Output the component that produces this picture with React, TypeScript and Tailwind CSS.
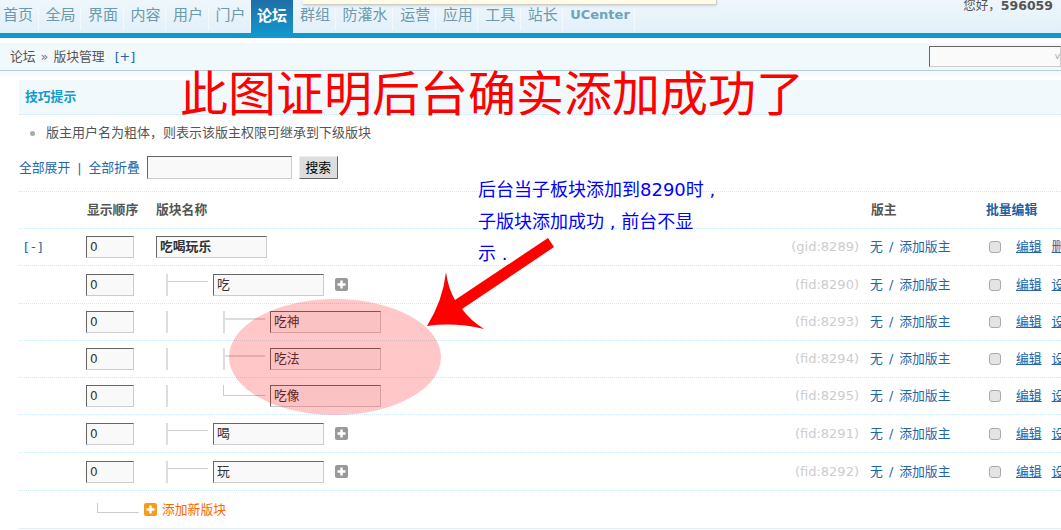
const navItems = ["首页", "全局", "界面", "内容", "用户", "门户", "论坛", "群组", "防灌水", "运营", "应用", "工具", "站长", "UCenter"];

const rows = [
  { name: "吃", level: 1, id: "(fid:8290)", h: "h-[38px]", tool: "设", plus: true },
  { name: "吃神", level: 2, id: "(fid:8293)", h: "h-[37px]", tool: "设" },
  { name: "吃法", level: 2, id: "(fid:8294)", h: "h-[37px]", tool: "设" },
  { name: "吃像", level: 3, id: "(fid:8295)", h: "h-[37px]", tool: "设" },
  { name: "喝", level: 1, id: "(fid:8291)", h: "h-[38px]", tool: "设", plus: true },
  { name: "玩", level: 1, id: "(fid:8292)", h: "h-[38px]", tool: "设", plus: true },
];

const inputBox = "h-[22px] border border-t-[#666] border-l-[#666] border-r-[#ccc] border-b-[#ccc] bg-[#f9f9f9] text-[#333]";

const Connector = ({ thin, last }: { thin?: boolean; last?: boolean }) => (
  <div className={last ? "h-[11px] w-[42px] self-start border-b border-l border-[#ccc]" : "h-[22px] w-[42px] border-l-2 border-[#ddd]"}>
    {!last && <div className={thin ? "h-[8px] border-b border-[#ccc]" : "h-[9px] border-b-2 border-[#ddd]"} />}
  </div>
);

const PlusIcon = ({ color }: { color: string }) => (
  <svg width="13" height="13" viewBox="0 0 13 13">
    <rect width="13" height="13" rx="2" fill={color} />
    <path d="M6.5 2.5v8M2.5 6.5h8" stroke="#fff" strokeWidth="2.4" />
  </svg>
);

const RowTail = ({ id, tool }: { id: string; tool: string }) => (
  <>
    <div className="w-[114px] shrink-0 pr-[11px] text-right text-[13px] text-[#ccc] whitespace-nowrap">{id}</div>
    <div className="w-[116px] shrink-0 text-[#2366a8] whitespace-nowrap">
      无 <span className="mx-[2px]">/</span> 添加版主
    </div>
    <div className="flex shrink-0 items-center whitespace-nowrap text-[#2366a8]">
      <span className="ml-[3px] h-[12px] w-[12px] rounded-[3px] border border-[#aaa] bg-[#e4e4e4]" />
      <span className="ml-[15px] underline">编辑</span>
      <span className="ml-[10px] underline">{tool}</span>
    </div>
  </>
);

const ChildRow = ({ row }: { row: (typeof rows)[number] }) => (
  <div className={`flex ${row.h} items-center border-b border-dotted border-[#cfe8f4]`}>
    <div className="w-[67px] shrink-0" />
    <div className="w-[70px] shrink-0">
      <div className={`${inputBox} w-[48px] pl-[3px] text-[12px] leading-[20px]`}>0</div>
    </div>
    <div className="flex w-[600px] shrink-0 items-center">
      <div className="ml-[10px] flex items-center">
        {row.level === 1 ? (
          <Connector thin />
        ) : (
          <>
            <div className="h-[22px] w-[57px] border-l-2 border-[#ddd]" />
            <Connector last={row.level === 3} />
          </>
        )}
      </div>
      <div className={`${inputBox} ml-[5px] w-[111px] pl-[3px] leading-[20px]`}>{row.name}</div>
      {row.plus && (
        <div className="ml-[11px] flex">
          <PlusIcon color="#999" />
        </div>
      )}
    </div>
    <RowTail id={row.id} tool={row.tool} />
  </div>
);

export default function App() {
  return (
    <div className="relative h-[530px] w-[1061px] overflow-hidden bg-white text-[12.8px] text-[#555] font-['DejaVu_Sans','Noto_Sans_CJK_SC',sans-serif]">
      <header className="h-[38px] bg-gradient-to-b from-[#eef6fb] to-[#e2f0fa] border-b-[5px] border-[#0c99cd]">
        <div className="flex items-start justify-between">
          <nav className="-ml-[4px] flex h-[33px]">
            {navItems.map((item) =>
              item === "论坛" ? (
                <div
                  key={item}
                  className="flex h-[38px] w-[42px] justify-center bg-gradient-to-b from-[#1e6ea7] to-[#0e9bd0] pt-[6px] text-[15px] leading-[20px] font-bold text-white"
                >
                  {item}
                </div>
              ) : (
                <div key={item} className="mt-[7px] flex h-[23px] items-start border-r border-[#f4f9fc] pl-[7px] pr-[4.5px]">
                  <span className={item === "UCenter" ? "text-[13px] leading-[16px] font-bold text-[#6ea4bb]" : "text-[15px] leading-[16px] text-[#6b9aac]"}>{item}</span>
                </div>
              )
            )}
          </nav>
          <div className="pr-[8px] text-[12.5px] leading-[12px] whitespace-nowrap">
            您好，<span className="font-bold">596059</span>
          </div>
        </div>
      </header>

      <div className="mt-[5px] flex h-[27px] items-center justify-between bg-[#f2f9fd]">
        <div className="flex items-center pl-[10px]">
          论坛
          <span className="mx-[5px] text-[#777]">»</span>
          版块管理
          <span className="ml-[10px] text-[#2366a8]">[+]</span>
        </div>
        <div className="flex h-[21px] w-[132px] items-center justify-end border border-t-[#666] border-l-[#666] border-b-[#ccc] border-r-[#ccc] bg-[#fafafa] text-[#aaa]">
          <span className="text-[9px]">v</span>
        </div>
      </div>
      <div className="h-[10px] border-t border-[#b5cfd9] bg-gradient-to-b from-[#f4f9fd] to-white" />

      <main className="pl-[19px]">
        <div className="flex h-[35px] items-center border-b border-dotted border-[#cfe8f4] bg-[#f2f9fd] pl-[6px] font-bold text-[#0f9bce]">技巧提示</div>
        <div className="mt-[9px] flex h-[18px] items-center pl-[11px] text-[13px]">
          <span className="h-[5px] w-[5px] rounded-full bg-[#aaa]" />
          <span className="ml-[11px]">版主用户名为粗体，则表示该版主权限可继承到下级版块</span>
        </div>
        <div className="mt-[14px] flex h-[23px] items-center text-[#2366a8]">
          <span>全部展开</span>
          <span className="mx-[7px]">|</span>
          <span>全部折叠</span>
          <div className={`${inputBox} ml-[7px] !h-[23px] w-[145px]`} />
          <div className="ml-[7px] flex h-[23px] w-[39px] items-center justify-center border border-t-[#eee] border-l-[#eee] border-r-[#666] border-b-[#666] bg-[#ddd] text-black">搜索</div>
        </div>

        <div className="mt-[12px] flex h-[38px] items-center border-y border-dotted border-[#cfe8f4] font-bold">
          <div className="w-[68px]" />
          <div className="w-[69px]">显示顺序</div>
          <div className="w-[715px]">版块名称</div>
          <div className="w-[115px]">版主</div>
          <div className="text-[#1c5fa5]">批量编辑</div>
        </div>

        <div className="flex h-[37px] items-center border-b border-dotted border-[#cfe8f4]">
          <div className="w-[67px] shrink-0 pl-[5px] tracking-[2px] text-[#2366a8]">[-]</div>
          <div className="w-[70px] shrink-0">
            <div className={`${inputBox} w-[48px] pl-[3px] text-[12px] leading-[20px]`}>0</div>
          </div>
          <div className="w-[600px] shrink-0">
            <div className={`${inputBox} w-[111px] pl-[3px] font-bold leading-[20px]`}>吃喝玩乐</div>
          </div>
          <RowTail id="(gid:8289)" tool="删" />
        </div>

        {rows.map((row) => (
          <ChildRow key={row.id} row={row} />
        ))}

        <div className="flex h-[38px] border-b border-[#e0eef8]">
          <div className="flex items-center pl-[78px]">
            <div className="mb-[4px] h-[10px] w-[42px] border-b border-l border-[#ccc]" />
            <div className="ml-[5px] flex">
              <PlusIcon color="#f79a1e" />
            </div>
            <span className="ml-[5px] text-[#f60]">添加新版块</span>
          </div>
        </div>
      </main>

      {/* annotations pasted on top of the screenshot */}
      <div className="absolute left-[303px] top-0 h-[5px] w-[414px] border-b border-r border-[#ccc] bg-[#fffbe4] shadow-sm" />
      <div className="absolute left-[180px] top-[55px] text-[48px] leading-[70px] whitespace-nowrap text-[#f00] font-['Noto_Sans_CJK_SC',sans-serif]">此图证明后台确实添加成功了</div>
      <div className="absolute left-[478px] top-[174px] w-[250px] text-[18px] leading-[32px] whitespace-pre-wrap text-[#00f] font-['DejaVu_Sans','Noto_Sans_CJK_SC',sans-serif]">
        {"后台当子板块添加到8290时 ,\n子版块添加成功 , 前台不显\n示 ."}
      </div>
      <div className="absolute left-[229px] top-[299px] h-[116px] w-[212px] rounded-[50%] bg-[#ff0000]/22" />
      <svg className="absolute left-0 top-0" width="1061" height="530" viewBox="0 0 1061 530">
        <path d="M548 238L554 247L462 309Q470 320 484 329Q455 322 427 326Q443 300 446 272Q448 288 455 300Z" fill="#f00" />
      </svg>
    </div>
  );
}
